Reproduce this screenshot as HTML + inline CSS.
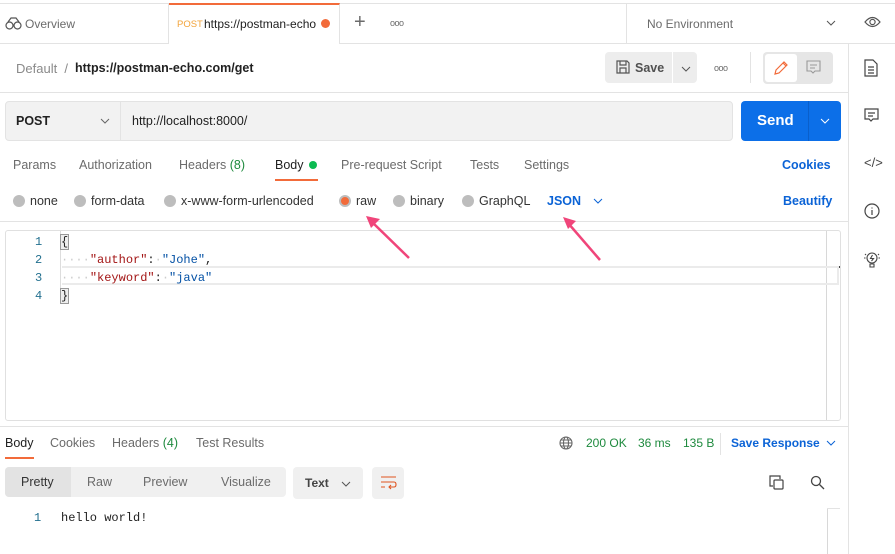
<!DOCTYPE html>
<html><head><meta charset="utf-8"><style>
*{box-sizing:border-box;margin:0;padding:0}
body{width:895px;height:554px;overflow:hidden;background:#fff;font-family:"Liberation Sans",sans-serif;font-size:12.5px;color:#212121;position:relative}
.a{position:absolute;white-space:nowrap}
.g{color:#6b6b6b}
.mono{font-family:"Liberation Mono",monospace;font-size:12px}
.rad{position:absolute;width:12px;height:12px;border-radius:50%;background:#bdbdbd}
</style></head><body>
<div class="a" style="left:0;top:3px;width:895px;height:1px;background:#e3e3e3"></div>
<div class="a" style="left:0;top:43px;width:895px;height:1px;background:#e3e3e3"></div>
<div class="a" style="left:169px;top:3px;width:171px;height:41px;background:#fff;border-top:2px solid #f26b3a;border-right:1px solid #e3e3e3"></div>
<div class="a" style="left:0;top:4px;width:169px;height:39px;border-right:1px solid #e3e3e3"></div>
<svg class="a" style="left:5px;top:17px" width="17" height="13" viewBox="0 0 17 13" fill="none" stroke="#555" stroke-width="1.2"><circle cx="4.5" cy="8.5" r="3.5"/><circle cx="12.5" cy="8.5" r="3.5"/><path d="M3 5 L6 1 H11 L14 5"/></svg>
<div class="a g" style="left:25px;top:17px;font-size:12px">Overview</div>
<div class="a" style="left:177px;top:19px;font-size:9.5px;color:#f2a33a">POST</div>
<div class="a" style="left:204px;top:17px;font-size:12px;width:113px;overflow:hidden">https://postman-echo</div>
<div class="a" style="left:321px;top:19px;width:9px;height:9px;border-radius:50%;background:#f26b3a"></div>
<div class="a g" style="left:354px;top:11px;font-size:20px;font-weight:300">+</div>
<div class="a g" style="left:390px;top:18px;font-size:9px;letter-spacing:-0.5px">ooo</div>
<div class="a" style="left:626px;top:4px;width:1px;height:39px;background:#e3e3e3"></div>
<div class="a g" style="left:647px;top:17px;font-size:12px">No Environment</div>
<svg class="a" style="left:826px;top:20px" width="10" height="6"><path d="M1 1 L5 5 L9 1" stroke="#555" fill="none"/></svg>
<svg class="a" style="left:864px;top:16px" width="17" height="12" viewBox="0 0 17 12" fill="none" stroke="#555" stroke-width="1.2"><path d="M1 6 Q8.5 -3 16 6 Q8.5 15 1 6Z"/><circle cx="8.5" cy="6" r="2.6"/></svg>
<div class="a" style="left:848px;top:44px;width:1px;height:510px;background:#e3e3e3"></div>
<svg class="a" style="left:864px;top:59px" width="14" height="18" fill="none" stroke="#444" stroke-width="1.2"><path d="M1 1 H9 L13 5 V17 H1Z M4 8 H10 M4 11 H10 M4 14 H10"/></svg>
<svg class="a" style="left:864px;top:108px" width="15" height="15" fill="none" stroke="#444" stroke-width="1.2"><path d="M1 1 H14 V11 H9 L7 13 L5 11 H1Z M4 5 H11 M4 8 H9"/></svg>
<div class="a" style="left:864px;top:155px;font-size:13px;color:#444">&lt;/&gt;</div>
<svg class="a" style="left:864px;top:203px" width="16" height="16" fill="none" stroke="#444" stroke-width="1.2"><circle cx="8" cy="8" r="7"/><path d="M8 7 V12 M8 4.5 V5.5"/></svg>
<svg class="a" style="left:863px;top:251px" width="18" height="18" fill="none" stroke="#444" stroke-width="1.1"><circle cx="9" cy="7" r="5"/><path d="M7 13 H11 V16 H7Z M9.5 4 L7.5 7.5 H10.5 L8.5 10 M1 7 H2.5 M15.5 7 H17 M2 3 L3 4 M16 3 L15 4"/></svg>
<div class="a" style="left:16px;top:61px;color:#8a8a8a;font-size:13px">Default&nbsp;&nbsp;/</div>
<div class="a" style="left:75px;top:61px;font-weight:bold;color:#212121;font-size:12.5px">https://postman-echo.com/get</div>
<div class="a" style="left:605px;top:52px;width:67px;height:31px;background:#ededed;border-radius:4px 0 0 4px"></div>
<svg class="a" style="left:616px;top:60px" width="14" height="14" fill="none" stroke="#555" stroke-width="1.2"><path d="M1 1 H11 L13 3 V13 H1Z M4 1 V5 H10 V1 M4 13 V8 H10 V13"/></svg>
<div class="a" style="left:635px;top:61px;font-weight:bold;color:#505050">Save</div>
<div class="a" style="left:673px;top:52px;width:24px;height:31px;background:#ededed;border-radius:0 4px 4px 0"></div>
<svg class="a" style="left:681px;top:66px" width="10" height="6"><path d="M1 1 L5 5 L9 1" stroke="#555" fill="none"/></svg>
<div class="a g" style="left:714px;top:63px;font-size:9px;letter-spacing:-0.5px">ooo</div>
<div class="a" style="left:750px;top:52px;width:1px;height:31px;background:#e3e3e3"></div>
<div class="a" style="left:763px;top:52px;width:70px;height:32px;background:#e6e6e6;border-radius:4px"></div>
<div class="a" style="left:765px;top:54px;width:32px;height:28px;background:#fff;border-radius:3px"></div>
<svg class="a" style="left:773px;top:60px" width="16" height="16" fill="none" stroke="#f26b3a" stroke-width="1.2"><path d="M2 14 L3 10 L11 2 L14 5 L6 13Z M10 3 L13 6"/></svg>
<svg class="a" style="left:806px;top:60px" width="15" height="15" fill="none" stroke="#999" stroke-width="1.1"><path d="M1 1 H14 V11 H9 L7 13 L5 11 H1Z M4 5 H11 M4 8 H9"/></svg>
<div class="a" style="left:0;top:92px;width:848px;height:1px;background:#e3e3e3"></div>
<div class="a" style="left:5px;top:101px;width:728px;height:40px;background:#f2f2f2;border:1px solid #e3e3e3;border-radius:4px"></div>
<div class="a" style="left:120px;top:102px;width:1px;height:38px;background:#e3e3e3"></div>
<div class="a" style="left:16px;top:114px;font-weight:bold">POST</div>
<svg class="a" style="left:100px;top:118px" width="10" height="6"><path d="M1 1 L5 5 L9 1" stroke="#666" fill="none"/></svg>
<div class="a" style="left:132px;top:114px">http://localhost:8000/</div>
<div class="a" style="left:741px;top:101px;width:100px;height:40px;background:#0c6fe8;border-radius:4px"></div>
<div class="a" style="left:808px;top:101px;width:1px;height:40px;background:#0a5fcb"></div>
<div class="a" style="left:757px;top:112px;color:#fff;font-weight:bold;font-size:15px">Send</div>
<svg class="a" style="left:820px;top:118px" width="10" height="6"><path d="M1 1 L5 5 L9 1" stroke="#fff" fill="none"/></svg>
<div class="a g" style="left:13px;top:158px">Params</div>
<div class="a g" style="left:79px;top:158px">Authorization</div>
<div class="a g" style="left:179px;top:158px">Headers <span style="color:#1e8a3e">(8)</span></div>
<div class="a" style="left:275px;top:158px">Body</div>
<div class="a" style="left:309px;top:161px;width:8px;height:8px;border-radius:50%;background:#0cbb52"></div>
<div class="a" style="left:275px;top:179px;width:43px;height:2px;background:#f26b3a"></div>
<div class="a g" style="left:341px;top:158px">Pre-request Script</div>
<div class="a g" style="left:470px;top:158px">Tests</div>
<div class="a g" style="left:524px;top:158px">Settings</div>
<div class="a" style="left:782px;top:158px;color:#0b63d6;font-weight:bold">Cookies</div>
<div class="rad" style="left:13px;top:195px"></div><div class="a" style="left:30px;top:194px;color:#333">none</div>
<div class="rad" style="left:74px;top:195px"></div><div class="a" style="left:91px;top:194px;color:#333">form-data</div>
<div class="rad" style="left:164px;top:195px"></div><div class="a" style="left:181px;top:194px;color:#333">x-www-form-urlencoded</div>
<div class="rad" style="left:339px;top:195px;background:#f26b3a;border:2px solid #bdbdbd"></div><div class="a" style="left:356px;top:194px;color:#333">raw</div>
<div class="rad" style="left:393px;top:195px"></div><div class="a" style="left:410px;top:194px;color:#333">binary</div>
<div class="rad" style="left:462px;top:195px"></div><div class="a" style="left:479px;top:194px;color:#333">GraphQL</div>
<div class="a" style="left:547px;top:194px;color:#0b63d6;font-weight:bold">JSON</div>
<svg class="a" style="left:593px;top:198px" width="10" height="6"><path d="M1 1 L5 5 L9 1" stroke="#0b63d6" fill="none"/></svg>
<div class="a" style="left:783px;top:194px;color:#0b63d6;font-weight:bold">Beautify</div>
<div class="a" style="left:0;top:221px;width:848px;height:1px;background:#e3e3e3"></div>
<div class="a" style="left:5px;top:230px;width:836px;height:191px;border:1px solid #e0e0e0;border-radius:3px"></div>
<div class="a" style="left:826px;top:231px;width:1px;height:189px;background:#d8d8d8"></div>
<div class="a" style="left:827px;top:266px;width:13px;height:2px;background:#444"></div>
<div class="a" style="left:62px;top:266px;width:777px;height:19px;border:2px solid #ebebeb;border-left:none"></div>
<div class="a" style="left:60px;top:231px;width:1px;height:72px;background:#ddd"></div>
<div class="a mono" style="left:35px;top:233px;color:#23708f;line-height:18px">1<br>2<br>3<br>4</div>
<div class="a mono" style="left:61px;top:233px;line-height:18px;color:#212121"><span style="background:#eee;outline:1px solid #999">{</span><br><span style="color:#ccc">····</span><span style="color:#a31515">"author"</span>:<span style="color:#ccc">·</span><span style="color:#0451a5">"Johe"</span>,<br><span style="color:#ccc">····</span><span style="color:#a31515">"keyword"</span>:<span style="color:#ccc">·</span><span style="color:#0451a5">"java"</span><br><span style="background:#eee;outline:1px solid #999">}</span></div>
<svg class="a" style="left:0;top:0" width="895" height="554"><g stroke="#f0457a" stroke-width="2.5" fill="#f0457a"><line x1="409" y1="258" x2="372" y2="222"/><polygon points="366,216 380,219 371,228" stroke="none"/><line x1="600" y1="260" x2="568" y2="223"/><polygon points="563,217 576,221 568,229" stroke="none"/></g></svg>
<div class="a" style="left:0;top:426px;width:848px;height:1px;background:#e3e3e3"></div>
<div class="a" style="left:5px;top:436px">Body</div>
<div class="a" style="left:5px;top:457px;width:29px;height:2px;background:#f26b3a"></div>
<div class="a g" style="left:50px;top:436px">Cookies</div>
<div class="a g" style="left:112px;top:436px">Headers <span style="color:#1e8a3e">(4)</span></div>
<div class="a g" style="left:196px;top:436px">Test Results</div>
<svg class="a" style="left:559px;top:436px" width="14" height="14" fill="none" stroke="#666" stroke-width="1.1"><circle cx="7" cy="7" r="6"/><ellipse cx="7" cy="7" rx="2.5" ry="6"/><path d="M1 7 H13 M2 4 H12 M2 10 H12"/></svg>
<div class="a" style="left:586px;top:436px;color:#1e8a3e;font-size:12px">200 OK</div>
<div class="a" style="left:638px;top:436px;color:#1e8a3e;font-size:12px">36 ms</div>
<div class="a" style="left:683px;top:436px;color:#1e8a3e;font-size:12px">135 B</div>
<div class="a" style="left:720px;top:433px;width:1px;height:22px;background:#e3e3e3"></div>
<div class="a" style="left:731px;top:436px;color:#0b63d6;font-weight:bold;font-size:12px">Save Response</div>
<svg class="a" style="left:826px;top:440px" width="10" height="6"><path d="M1 1 L5 5 L9 1" stroke="#0b63d6" fill="none"/></svg>
<div class="a" style="left:5px;top:467px;width:281px;height:30px;background:#f0f0f0;border-radius:4px"></div>
<div class="a" style="left:5px;top:467px;width:66px;height:30px;background:#e3e3e3;border-radius:4px 0 0 4px"></div>
<div class="a" style="left:21px;top:475px;color:#333">Pretty</div>
<div class="a g" style="left:87px;top:475px">Raw</div>
<div class="a g" style="left:143px;top:475px">Preview</div>
<div class="a g" style="left:221px;top:475px">Visualize</div>
<div class="a" style="left:293px;top:467px;width:70px;height:32px;background:#f0f0f0;border-radius:4px"></div>
<div class="a" style="left:305px;top:476px;font-size:12px;color:#444;font-weight:bold">Text</div>
<svg class="a" style="left:341px;top:481px" width="10" height="6"><path d="M1 1 L5 5 L9 1" stroke="#555" fill="none"/></svg>
<div class="a" style="left:372px;top:467px;width:32px;height:32px;background:#f0f0f0;border-radius:4px"></div>
<svg class="a" style="left:380px;top:476px" width="17" height="14" fill="none" stroke="#e0531e" stroke-width="1.1"><path d="M1 1 H16 M1 6 H14 Q16 6 16 8.5 Q16 11 14 11 H9 M11 9 L9 11 L11 13 M1 11 H5"/></svg>
<svg class="a" style="left:769px;top:475px" width="16" height="16" fill="none" stroke="#444" stroke-width="1.2"><path d="M4 11 H1 V1 H11 V4"/><rect x="5" y="5" width="9" height="9" rx="1"/></svg>
<svg class="a" style="left:810px;top:475px" width="15" height="15" fill="none" stroke="#444" stroke-width="1.3"><circle cx="6" cy="6" r="4.5"/><path d="M9.5 9.5 L14 14"/></svg>
<div class="a mono" style="left:34px;top:511px;color:#23708f">1</div>
<div class="a mono" style="left:61px;top:511px">hello world!</div>
<div class="a" style="left:827px;top:508px;width:1px;height:46px;background:#d8d8d8"></div>
<div class="a" style="left:827px;top:508px;width:13px;height:1px;background:#e3e3e3"></div>
</body></html>
